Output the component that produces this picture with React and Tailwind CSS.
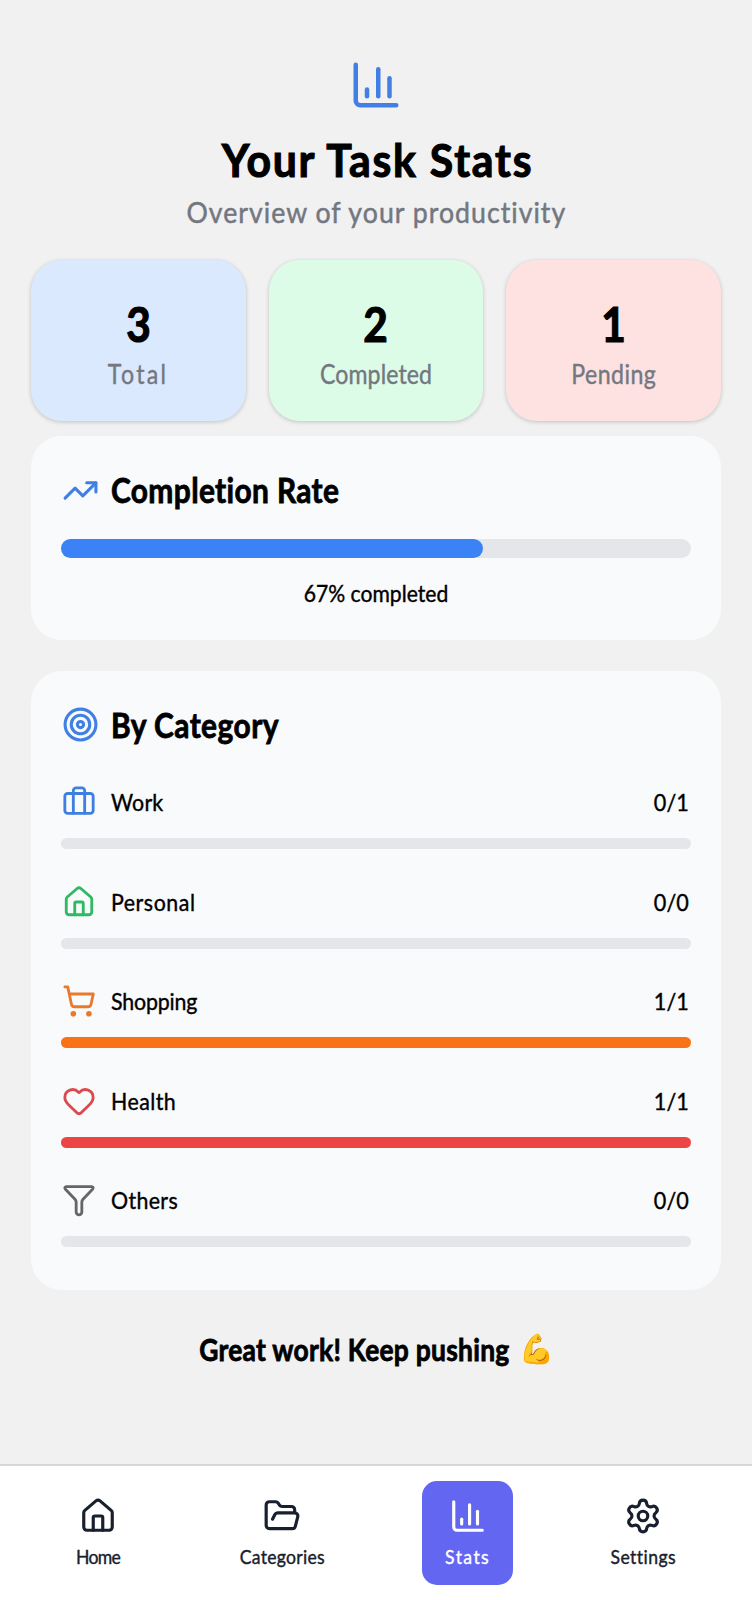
import {
  Briefcase,
  ChartColumn,
  FolderOpen,
  Heart,
  House,
  Settings,
  ShoppingCart,
  Target,
  TrendingUp,
} from "lucide-react";

function Filter({ className }) {
  return (
    <svg viewBox="0 0 24 24" fill="none" stroke="currentColor" strokeWidth="2" strokeLinecap="round" strokeLinejoin="round" className={className}>
      <path d="M3 2.5h18a1 1 0 0 1 .74 1.67l-6.9 7.3A3 3 0 0 0 14 13.6V20.5a2 2 0 0 1-4 0v-6.9a3 3 0 0 0-.84-2.13l-6.9-7.3A1 1 0 0 1 3 2.5z" />
    </svg>
  );
}

const summary = [
  { value: "3", label: "Total", card: "bg-[#dbe9fe]", text: "tracking-[2.6px]" },
  { value: "2", label: "Completed", card: "bg-[#dcfce7]", text: "tracking-[0.1px]" },
  { value: "1", label: "Pending", card: "bg-[#fee2e2]", text: "tracking-[0.5px]" },
];

const categories = [
  { name: "Work", Icon: Briefcase, color: "text-[#3f7fe0]", bar: "bg-blue-500", done: 0, total: 1, text: "tracking-[0.2px]" },
  { name: "Personal", Icon: House, color: "text-[#2fb963]", bar: "bg-green-500", done: 0, total: 0, text: "tracking-[0.6px]" },
  { name: "Shopping", Icon: ShoppingCart, color: "text-[#ea7a2b]", bar: "bg-[#f97316]", done: 1, total: 1, text: "tracking-[-0.2px]" },
  { name: "Health", Icon: Heart, color: "text-[#dc4a4e]", bar: "bg-[#ec4545]", done: 1, total: 1, text: "tracking-[0.5px]" },
  { name: "Others", Icon: Filter, color: "text-[#666669]", bar: "bg-gray-500", done: 0, total: 0, text: "tracking-[0.4px]" },
];

const tabs = [
  { name: "Home", Icon: House, box: "w-[120px]", text: "tracking-[-0.8px]" },
  { name: "Categories", Icon: FolderOpen, box: "ml-[64px] w-[120px]", text: "tracking-[0.3px]" },
  { name: "Stats", Icon: ChartColumn, box: "ml-[80px] w-[91px] bg-[#6366f1] text-white", text: "tracking-[1.6px]" },
  { name: "Settings", Icon: Settings, box: "ml-[70px] w-[120px]", text: "tracking-[0.5px]" },
];

export default function App() {
  return (
    <div className="flex h-[1600px] w-[752px] flex-col bg-[#f1f1f1] font-['Lato',sans-serif] text-black">
      <main className="flex flex-1 flex-col px-[31px] pt-[58px]">
        <header className="flex flex-col items-center">
          <ChartColumn className="size-[54px] text-[#4080e4]" />
          <h1 className="mt-[22px] ml-[2px] scale-x-[0.93] text-[46px] leading-[52px] font-bold tracking-[1.9px] whitespace-nowrap [-webkit-text-stroke:1.1px_currentColor]">Your Task Stats</h1>
          <p className="mt-[8px] scale-x-[0.92] text-[29px] leading-[36px] tracking-[1.1px] whitespace-nowrap text-[#737780] [-webkit-text-stroke:0.5px_currentColor]">Overview of your productivity</p>
        </header>

        <section className="mt-[30px] grid h-[161px] grid-cols-3 gap-[23px]">
          {summary.map((s) => (
            <div key={s.label} className={`flex flex-col items-center rounded-[31px] pt-[37px] shadow-[0_1px_4px_rgba(0,0,0,0.2)] ${s.card}`}>
              <span className="scale-x-[0.9] text-[47px] leading-[54px] font-bold [-webkit-text-stroke:1.2px_currentColor]">{s.value}</span>
              <span className={`mt-[7px] scale-x-[0.89] text-[26px] leading-[32px] text-[#737780] [-webkit-text-stroke:0.4px_currentColor] ${s.text}`}>{s.label}</span>
            </div>
          ))}
        </section>

        <section className="mt-[15px] h-[204px] rounded-[31px] bg-[#f9fafc] px-[30px] pt-[34px]">
          <div className="flex h-10 items-center gap-[12px] pl-px">
            <TrendingUp className="size-[37px] text-[#4080e4]" />
            <h2 className="origin-left scale-x-[0.88] text-[34px] leading-10 font-bold tracking-[0.4px] [-webkit-text-stroke:0.8px_currentColor]">Completion Rate</h2>
          </div>
          <div className="mt-[29px] h-[19px] rounded-full bg-[#e5e6ea]">
            <div className="h-full w-[67%] rounded-full bg-[#3b82f6]" />
          </div>
          <p className="mt-[19px] scale-x-[0.88] text-center text-[24px] leading-[32px] [-webkit-text-stroke:0.4px_currentColor]">67% completed</p>
        </section>

        <section className="mt-[31px] h-[619px] rounded-[31px] bg-[#f9fafc] px-[30px] pt-[33px]">
          <div className="flex h-10 items-center gap-[12px] pl-px">
            <Target className="size-[37px] text-[#4080e4]" />
            <h2 className="mt-[2px] origin-left scale-x-[0.88] text-[34px] leading-10 font-bold tracking-[0.5px] [-webkit-text-stroke:0.8px_currentColor]">By Category</h2>
          </div>
          <ul className="mt-[38px]">
            {categories.map(({ name, Icon, color, bar, done, total, text }) => (
              <li key={name} className="h-[99.6px]">
                <div className="flex h-[40px] items-center pl-px">
                  <Icon className={`size-[34px] ${color}`} />
                  <span className={`ml-[15px] origin-left scale-x-[0.89] text-[24px] leading-8 [-webkit-text-stroke:0.4px_currentColor] ${text}`}>{name}</span>
                  <span className="mr-[2px] ml-auto origin-right scale-x-[0.9] text-[24px] leading-8 [-webkit-text-stroke:0.4px_currentColor]">{`${done}/${total}`}</span>
                </div>
                <div className="mt-[16px] h-[11px] rounded-full bg-[#e5e6ea]">
                  {done > 0 && <div className={`h-full w-full rounded-full ${bar}`} />}
                </div>
              </li>
            ))}
          </ul>
        </section>

        <p className="mt-[38px] flex scale-x-[0.88] items-center justify-center gap-[13px] text-[30px] leading-[40px] font-bold whitespace-nowrap">
          <span className="tracking-[0.3px] [-webkit-text-stroke:0.8px_currentColor]">Great work! Keep pushing</span>
          <span className="mt-px scale-x-[1.1] font-['Noto_Color_Emoji',sans-serif] text-[29px]">💪</span>
        </p>
      </main>

      <nav className="flex h-[136px] border-t-2 border-[#d6d7da] bg-white pt-[15px] pl-[38px] text-[#18202d]">
        {tabs.map(({ name, Icon, box, text }) => (
          <div key={name} className={`flex h-[104px] shrink-0 flex-col items-center rounded-[15px] pt-[16px] ${box}`}>
            <Icon className="size-[38px]" />
            <span className={`mt-[9px] scale-x-[0.88] text-[20px] leading-6 whitespace-nowrap [-webkit-text-stroke:0.4px_currentColor] ${text}`}>{name}</span>
          </div>
        ))}
      </nav>
    </div>
  );
}
